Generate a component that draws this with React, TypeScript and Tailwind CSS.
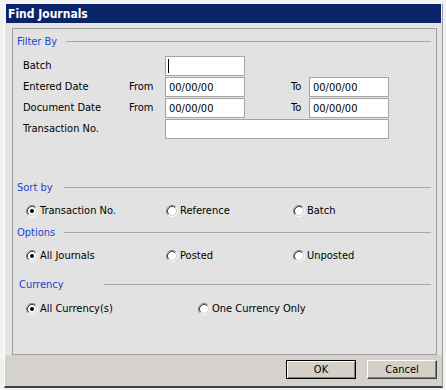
import React from "react";

const FONT = { fontFamily: "Tahoma, 'DejaVu Sans Condensed', 'Liberation Sans', sans-serif" };

function Radio({ checked }: { checked?: boolean }) {
  return (
    <svg width="12" height="12" viewBox="0 0 12 12" className="shrink-0">
      <circle cx="6" cy="6" r="4.2" fill="#ffffff" />
      <path d="M2.11 9.89 A5.5 5.5 0 0 1 9.89 2.11" fill="none" stroke="#808080" strokeWidth="1" />
      <path d="M2.82 9.18 A4.5 4.5 0 0 1 9.18 2.82" fill="none" stroke="#404040" strokeWidth="1" />
      <path d="M9.89 2.11 A5.5 5.5 0 0 1 2.11 9.89" fill="none" stroke="#ffffff" strokeWidth="1" />
      <path d="M9.18 2.82 A4.5 4.5 0 0 1 2.82 9.18" fill="none" stroke="#d4d0c8" strokeWidth="1" />
      {checked && <circle cx="6" cy="6" r="2" fill="#000000" />}
    </svg>
  );
}

function Header({ label, lineLeft, textLeft = 4 }: { label: string; lineLeft: number; textLeft?: number }) {
  return (
    <div className="flex items-center h-[13px] pr-[5px]">
      <div style={{ width: lineLeft, paddingLeft: textLeft }} className="shrink-0 text-[#1a44d0] leading-[13px] whitespace-nowrap">
        {label}
      </div>
      <div className="flex-1 h-px bg-[#a8a8a8]" />
    </div>
  );
}

function Input({ w, value, caret }: { w: number; value?: string; caret?: boolean }) {
  return (
    <div
      style={{ width: w }}
      className="h-[20px] border border-[#a4a4a4] bg-white flex items-center pl-[3px] leading-[13px] text-black"
    >
      {caret && <div className="w-px h-[14px] bg-black -ml-[1px]" />}
      {value}
    </div>
  );
}

function RadioItem({ label, checked, w }: { label: string; checked?: boolean; w?: number }) {
  return (
    <div style={w ? { width: w } : undefined} className="flex items-center gap-[2px] shrink-0">
      <Radio checked={checked} />
      <span className="leading-[14px] whitespace-nowrap">{label}</span>
    </div>
  );
}

export default function App() {
  return (
    <div style={FONT} className="w-[446px] h-[390px] bg-[#f2f2f2] pt-[3px] pl-[4px] text-[11px] text-black overflow-hidden">
      <div className="w-[439px] h-[385px] flex flex-col border-t border-t-[#f8f8f8] border-l border-l-white border-r border-r-[#9a9a9a] border-b-2 border-b-[#404040]">
        <div className="ml-[1px] w-[435px] h-[19px] bg-[#0a246a] flex items-center pl-[2px] text-white font-bold text-[12px]">
          Find Journals
        </div>
        <div className="h-[332px] bg-[#e4e4e4] pt-[5px] pl-[7px]">
          <div className="w-[425px] h-[327px] border border-[#a0a0a0] bg-[#e2e2e2] pt-[6px]">
            <Header label="Filter By" lineLeft={53} />
            <div className="mt-[8px] flex flex-col gap-[1px] pl-[10px]">
              <div className="flex items-center h-[20px]">
                <div className="w-[142px]">Batch</div>
                <Input w={80} caret />
              </div>
              <div className="flex items-center h-[20px]">
                <div className="w-[106px]">Entered Date</div>
                <div className="w-[36px]">From</div>
                <Input w={80} value="00/00/00" />
                <div className="w-[46px]" />
                <div className="w-[18px]">To</div>
                <Input w={80} value="00/00/00" />
              </div>
              <div className="flex items-center h-[20px]">
                <div className="w-[106px]">Document Date</div>
                <div className="w-[36px]">From</div>
                <Input w={80} value="00/00/00" />
                <div className="w-[46px]" />
                <div className="w-[18px]">To</div>
                <Input w={80} value="00/00/00" />
              </div>
              <div className="flex items-center h-[20px]">
                <div className="w-[142px]">Transaction No.</div>
                <Input w={224} />
              </div>
            </div>

            <div className="mt-[42px]">
              <Header label="Sort by" lineLeft={51} />
            </div>
            <div className="mt-[10px] flex items-center h-[14px] pl-[13px]">
              <RadioItem label="Transaction No." checked w={140} />
              <RadioItem label="Reference" w={127} />
              <RadioItem label="Batch" />
            </div>

            <div className="mt-[8px]">
              <Header label="Options" lineLeft={51} />
            </div>
            <div className="mt-[10px] flex items-center h-[14px] pl-[13px]">
              <RadioItem label="All Journals" checked w={140} />
              <RadioItem label="Posted" w={127} />
              <RadioItem label="Unposted" />
            </div>

            <div className="mt-[15px]">
              <Header label="Currency" lineLeft={91} textLeft={6} />
            </div>
            <div className="mt-[11px] flex items-center h-[14px] pl-[13px]">
              <RadioItem label="All Currency(s)" checked w={172} />
              <RadioItem label="One Currency Only" />
            </div>
          </div>
        </div>
        <div className="flex-1 bg-[#d5d2cd] flex justify-end items-start pt-[5px] pr-[5px] gap-[11px]">
          <button className="w-[70px] h-[19px] border border-black bg-[#d4d0c8] shadow-[inset_1px_1px_0_#ffffff,inset_-1px_-1px_0_#808080] flex items-center justify-center leading-none">
            OK
          </button>
          <button className="w-[70px] h-[19px] bg-[#d4d0c8] border-t border-l border-t-white border-l-white border-r border-b border-r-[#404040] border-b-[#404040] shadow-[inset_-1px_-1px_0_#808080] flex items-center justify-center leading-none">
            Cancel
          </button>
        </div>
      </div>
    </div>
  );
}
